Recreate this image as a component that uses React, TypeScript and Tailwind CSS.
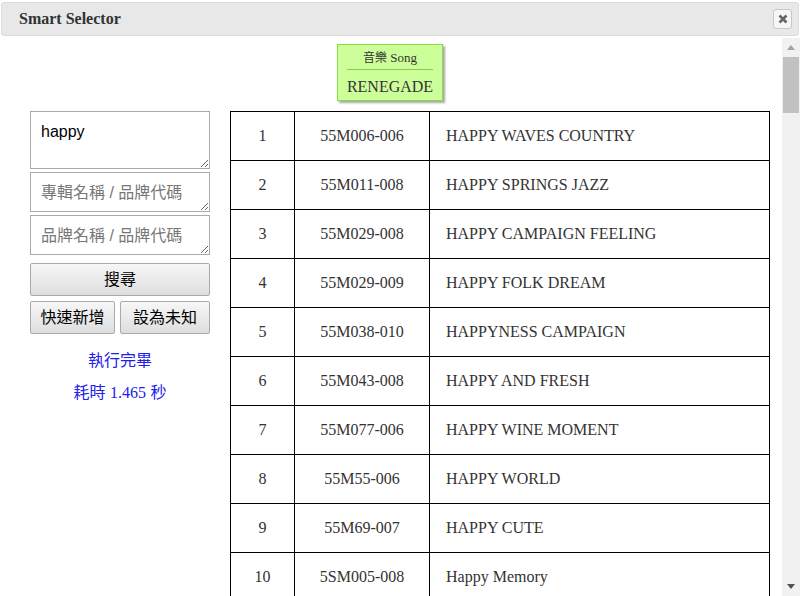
import React from "react";

const rows = [
  ["1", "55M006-006", "HAPPY WAVES COUNTRY"],
  ["2", "55M011-008", "HAPPY SPRINGS JAZZ"],
  ["3", "55M029-008", "HAPPY CAMPAIGN FEELING"],
  ["4", "55M029-009", "HAPPY FOLK DREAM"],
  ["5", "55M038-010", "HAPPYNESS CAMPAIGN"],
  ["6", "55M043-008", "HAPPY AND FRESH"],
  ["7", "55M077-006", "HAPPY WINE MOMENT"],
  ["8", "55M55-006", "HAPPY WORLD"],
  ["9", "55M69-007", "HAPPY CUTE"],
  ["10", "5SM005-008", "Happy Memory"],
];

const serif = "font-['Liberation_Serif','Times_New_Roman',serif]";
const cjk = "font-['Liberation_Sans','Noto_Sans_CJK_TC',sans-serif]";

export default function App() {
  return (
    <div className="w-[803px] h-[596px] bg-white overflow-hidden">
      <div className="w-[800px] h-[596px] flex flex-col">
        <div className="mx-[1px] mt-[2px] h-[34px] shrink-0 bg-[#e8e8e8] border border-[#dcdcdc] rounded-[3px] flex items-center justify-between pl-[17px] pr-[6px]">
          <span className={`${serif} font-bold text-[16px] text-[#333]`}>Smart Selector</span>
          <button className="w-[19px] h-[20px] bg-[#f6f6f6] border border-[#c8c8c8] rounded-[3px] flex items-center justify-center">
            <svg width="10" height="10" viewBox="0 0 10 10">
              <path d="M1.5 1.5 L8.5 8.5 M8.5 1.5 L1.5 8.5" stroke="#666" strokeWidth="2.6" strokeLinecap="butt" />
            </svg>
          </button>
        </div>
        <div className="flex-1 flex mt-[2px] min-h-0">
          <div className="flex-1 overflow-hidden">
            <div className="flex justify-center pt-[6px] pr-[2px]">
              <div className="w-[106px] h-[57px] bg-[#ccff99] border border-[#88dd44] shadow-[2px_2px_2px_rgba(0,0,0,0.35)] flex flex-col items-center">
                <div className={`${serif} text-[13px] text-[#333] mt-[4px] leading-[16px]`}>
                  <span className="font-['Noto_Sans_CJK_TC',sans-serif] text-[12px]">音樂</span> Song
                </div>
                <div className="w-[86px] h-px bg-[#88cc44] mt-[3px]" />
                <div className={`${serif} text-[16px] text-[#333] mt-[8px] leading-[18px]`}>RENEGADE</div>
              </div>
            </div>
            <div className="flex pl-[30px] pt-[10px] gap-[20px]">
              <div className="w-[180px] flex flex-col shrink-0">
                <textarea
                  defaultValue="happy"
                  className="w-[180px] h-[58px] border border-[#aaa] px-[10px] pt-[10px] text-[16px] font-['Liberation_Sans',Arial,sans-serif] text-black resize-y outline-none block leading-[20px]"
                />
                <textarea
                  placeholder="專輯名稱 / 品牌代碼"
                  className={`${cjk} mt-[3px] w-[180px] h-[40px] border border-[#aaa] px-[10px] pt-[9px] text-[16px] leading-[22px] placeholder:text-[#777] resize-y outline-none block overflow-hidden`}
                />
                <textarea
                  placeholder="品牌名稱 / 品牌代碼"
                  className={`${cjk} mt-[3px] w-[180px] h-[40px] border border-[#aaa] px-[10px] pt-[9px] text-[16px] leading-[22px] placeholder:text-[#777] resize-y outline-none block overflow-hidden`}
                />
                <button className={`${cjk} mt-[8px] h-[33px] pt-[1px] border border-[#aaa] rounded-[2px] bg-gradient-to-b from-[#f7f7f7] to-[#dedede] text-[16px] text-black`}>
                  搜尋
                </button>
                <div className="flex gap-[5px] mt-[5px]">
                  <button className={`${cjk} w-[85px] h-[33px] pt-[1px] border border-[#aaa] rounded-[2px] bg-gradient-to-b from-[#f7f7f7] to-[#dedede] text-[16px] text-black`}>
                    快速新增
                  </button>
                  <button className={`${cjk} w-[90px] h-[33px] pt-[1px] border border-[#aaa] rounded-[2px] bg-gradient-to-b from-[#f7f7f7] to-[#dedede] text-[16px] text-black`}>
                    設為未知
                  </button>
                </div>
                <div className={`${cjk} text-center text-[16px] text-[#2020ee] mt-[16px] leading-[22px]`}>執行完畢</div>
                <div className={`${cjk} text-center text-[16px] text-[#2020ee] mt-[10px] leading-[22px]`}>
                  耗時 <span className={serif}>1.465</span> 秒
                </div>
              </div>
              <table className={`${serif} border-collapse w-[540px] text-[16px] text-[#333] shrink-0`}>
                <tbody>
                  {rows.map((r) => (
                    <tr key={r[0]} className="h-[49px]">
                      <td className="border border-black w-[64px] text-center">{r[0]}</td>
                      <td className="border border-black w-[135px] text-center">{r[1]}</td>
                      <td className="border border-black pl-[16px]">{r[2]}</td>
                    </tr>
                  ))}
                </tbody>
              </table>
            </div>
          </div>
          <div className="w-[18px] shrink-0 bg-[#f1f1f1] flex flex-col items-center">
            <div className="h-[19px] flex items-center justify-center">
              <svg width="8" height="5" viewBox="0 0 8 5"><path d="M0 5 L4 0 L8 5 Z" fill="#a3a3a3" /></svg>
            </div>
            <div className="w-[16px] h-[56px] bg-[#c1c1c1]" />
            <div className="flex-1" />
            <div className="h-[19px] flex items-center justify-center">
              <svg width="8" height="5" viewBox="0 0 8 5"><path d="M0 0 L8 0 L4 5 Z" fill="#505050" /></svg>
            </div>
          </div>
        </div>
      </div>
    </div>
  );
}
